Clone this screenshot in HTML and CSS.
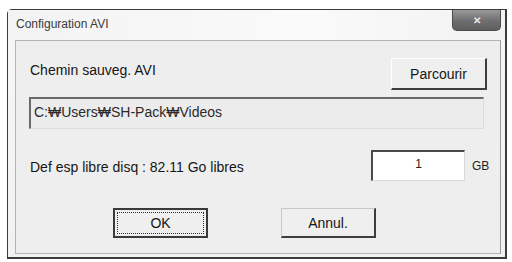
FILE: index.html
```html
<!DOCTYPE html>
<html lang="fr">
<head>
    <meta charset="UTF-8">
    <title>Configuration AVI</title>
    <link rel="stylesheet" href="styles.css">
</head>
<body>
    <div class="window">
        <div class="titlebar">
            <span class="title">Configuration AVI</span>
            <button type="button" class="close">&#x2715;</button>
        </div>
        <div class="client">
            <div class="row">
                <span class="label">Chemin sauveg. AVI</span>
                <button type="button" class="btn browse">Parcourir</button>
            </div>
            <div class="path">C:&#x20A9;Users&#x20A9;SH-Pack&#x20A9;Videos</div>
            <div class="row space">
                <span class="label">Def esp libre disq : 82.11 Go libres</span>
                <div class="size">
                    <input type="text" class="field" value="1">
                    <span class="unit">GB</span>
                </div>
            </div>
            <div class="actions">
                <button type="button" class="btn ok"><span class="focus">OK</span></button>
                <button type="button" class="btn">Annul.</button>
            </div>
        </div>
    </div>
</body>
</html>
```

FILE: styles.css
```css
body {
    margin: 0;
    background: #ffffff;
    font-family: "Liberation Sans", Arial, sans-serif;
    font-size: 14px;
    color: #1e1e1e;
}
.window {
    margin: 9px 0 0 7px;
    width: 500px;
    height: 250px;
    box-sizing: border-box;
    border: 1px solid #3c3c3c;
    border-top-left-radius: 5px;
    border-right-width: 2px;
    border-bottom-width: 2px;
    background: linear-gradient(#f7f7f7, #f1f1f1);
    padding: 0 4px 3px 7px;
    display: flex;
    flex-direction: column;
}
.titlebar {
    height: 30px;
    display: flex;
    align-items: flex-start;
    justify-content: space-between;
    background: linear-gradient(90deg, #f3f3f3, #fafafa 60%, #f2f2f2);
    margin: 0 -4px 0 -7px;
    padding-left: 8px;
}
.title {
    margin-top: 7px;
    color: #3a3a3a;
    font-size: 12px;
}
.close {
    width: 49px;
    height: 21px;
    border: 1px solid #4a4a4a;
    border-top: none;
    border-radius: 0 0 5px 5px;
    background: linear-gradient(#9a9a9a, #6e6e6e 55%, #5e5e5e);
    color: #e8e8e8;
    font-size: 10px;
    font-weight: bold;
    padding: 0;
    margin-right: 4px;
}
.client {
    flex: 1;
    border: 1px solid #b4b4b4;
    border-right-color: #9a9a9a;
    background: #eeeeee;
    padding: 17px 13px 0 14px;
    display: flex;
    flex-direction: column;
}
.row {
    display: flex;
    justify-content: space-between;
    align-items: center;
}
.label {
    color: #161616;
}
.row .label {
    align-self: flex-start;
    margin-top: 4px;
}
.row.space .label {
    align-self: center;
    margin-top: 2px;
}
.btn {
    width: 95px;
    height: 30px;
    box-sizing: border-box;
    font-family: "Liberation Sans", Arial, sans-serif;
    font-size: 14px;
    color: #161616;
    background: #efefef;
    border: 1px solid #c8c8c8;
    border-right: 2px solid #3e3e3e;
    border-bottom: 2px solid #3e3e3e;
    padding: 0;
}
.browse {
    width: 96px;
    height: 32px;
    border-top-color: #ffffff;
    border-left-color: #ffffff;
}
.path {
    margin: 7px 3px 0 -1px;
    height: 32px;
    box-sizing: border-box;
    border: 1px solid #dcdcdc;
    border-top: 2px solid #6a6a6a;
    border-left: 2px solid #6a6a6a;
    background: #ececec;
    padding: 5px 0 0 3px;
    font-size: 14px;
    color: #2a2a2a;
}
.space {
    margin-top: 21px;
}
.size {
    display: flex;
    align-items: center;
}
.field {
    width: 94px;
    height: 31px;
    box-sizing: border-box;
    border: 1px solid #d8d8d8;
    border-top: 2px solid #4a4a4a;
    border-left: 2px solid #4a4a4a;
    background: #ffffff;
    text-align: center;
    font-family: "Liberation Sans", Arial, sans-serif;
    font-size: 12px;
    color: #222222;
    padding: 0 0 4px;
    margin-right: 7px;
}
.unit {
    width: 15px;
    font-size: 12px;
    margin-top: 0;
}
.actions {
    display: flex;
    gap: 73px;
    padding-left: 83px;
    margin-top: 27px;
}
.ok {
    border: 2px solid #3a3a3a;
    padding: 2px;
}
.focus {
    display: flex;
    height: 100%;
    align-items: center;
    justify-content: center;
    box-sizing: border-box;
    border: 1px dotted #333333;
}
```
